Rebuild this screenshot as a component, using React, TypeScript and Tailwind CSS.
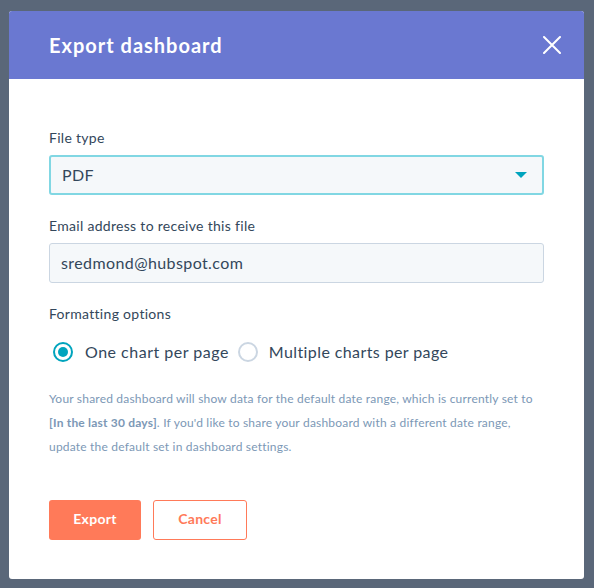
export default function App() {
  return (
    <div
      className="w-[594px] h-[588px] bg-[#5a6779] overflow-hidden pt-[11px] pl-[9px]"
      style={{ fontFamily: "Lato, 'Noto Sans', sans-serif" }}
    >
      <div className="w-[575px] h-[568px] bg-white rounded-[3px] overflow-hidden flex flex-col">
        <div className="h-[68px] bg-[#6a78d1] flex items-center justify-between pl-10 pr-[23px]">
          <h1 className="text-white text-[20px] font-bold leading-none tracking-[1px]">Export dashboard</h1>
          <svg width="18" height="18" viewBox="0 0 18 18" className="text-white">
            <path d="M1 1 L17 17 M17 1 L1 17" stroke="currentColor" strokeWidth="2" strokeLinecap="round" />
          </svg>
        </div>
        <div className="px-10 pt-[49px] text-[#33475b]">
          <label className="block text-[14px] leading-[20px] mb-[7px] tracking-[0.3px]">File type</label>
          <div className="h-[40px] bg-[#f5f8fa] border-2 border-[#81d7e3] rounded-[3px] flex items-center justify-between pl-[11px] pr-[15px]">
            <span className="text-[16px] tracking-[0.4px]">PDF</span>
            <svg width="12" height="6" viewBox="0 0 12 6">
              <path d="M0 0 H12 L6 6 Z" fill="#00a4bd" />
            </svg>
          </div>
          <label className="block text-[14px] leading-[20px] mt-[21px] mb-[7px] tracking-[0.3px]">Email address to receive this file</label>
          <div className="h-[40px] bg-[#f5f8fa] border border-[#cbd6e2] rounded-[3px] flex items-center pl-[11px]">
            <span className="text-[16px] tracking-[0.4px]">sredmond@hubspot.com</span>
          </div>
          <label className="block text-[14px] leading-[20px] mt-[21px] tracking-[0.3px]">Formatting options</label>
          <div className="flex items-center mt-[16px] h-[24px]">
            <div className="flex items-center ml-[4px]">
              <span className="w-[20px] h-[20px] rounded-full border-2 border-[#00a4bd] flex items-center justify-center">
                <span className="w-[10px] h-[10px] rounded-full bg-[#00a4bd]" />
              </span>
              <span className="text-[16px] ml-[12px] tracking-[0.5px]">One chart per page</span>
            </div>
            <div className="flex items-center ml-[9px]">
              <span className="w-[20px] h-[20px] rounded-full border-2 border-[#cbd6e2]" />
              <span className="text-[16px] ml-[11px] tracking-[0.4px]">Multiple charts per page</span>
            </div>
          </div>
          <p className="text-[12px] leading-[24px] text-[#7c98b6] mt-[23px] tracking-[0.2px]">
            Your shared dashboard will show data for the default date range, which is currently set to{" "}
            <span className="font-bold">[In the last 30 days]</span>. If you'd like to share your dashboard with a different date range, update the default set in dashboard settings.
          </p>
          <div className="flex gap-[12px] mt-[41px]">
            <button className="w-[92px] h-[40px] pb-[3px] bg-[#ff7a59] text-white text-[14px] font-bold rounded-[3px] tracking-[0.3px]">Export</button>
            <button className="w-[94px] h-[40px] pb-[3px] bg-white border border-[#ff7a59] text-[#ff7a59] text-[14px] font-bold rounded-[3px] tracking-[0.3px]">Cancel</button>
          </div>
        </div>
      </div>
    </div>
  );
}
